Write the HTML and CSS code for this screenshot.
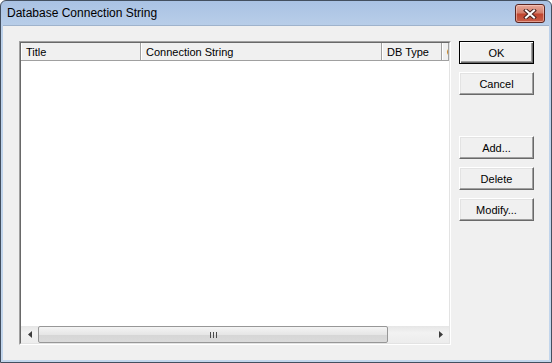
FILE: index.html
```html
<!DOCTYPE html>
<html lang="en">
<head>
    <meta charset="UTF-8">
    <title>Database Connection String</title>
    <link rel="stylesheet" href="styles.css">
</head>
<body>
    <div class="window">
        <div class="titlebar">
            <span class="title">Database Connection String</span>
            <button class="close" title="Close">
                <svg width="14" height="10" viewBox="0 0 14 10">
                    <path d="M3 1.5 L11 8.5 M11 1.5 L3 8.5" stroke="#4a2420" stroke-width="4" stroke-linecap="square" fill="none"/>
                    <path d="M3 1.5 L11 8.5 M11 1.5 L3 8.5" stroke="#ffffff" stroke-width="2" stroke-linecap="square" fill="none"/>
                </svg>
            </button>
        </div>

        <div class="client">
            <!-- list of connections -->
            <div class="listview">
                <div class="listinner">
                    <div class="header">
                        <div class="col col-title">Title</div>
                        <div class="col col-conn">Connection String</div>
                        <div class="col col-type">DB Type</div>
                        <div class="col col-more">C</div>
                    </div>
                    <div class="rows"></div>
                    <div class="hscroll">
                        <div class="arrow">
                            <svg width="4" height="7" viewBox="0 0 4 7"><path d="M4 0 L0 3.5 L4 7 Z" fill="#3c3c3c"/></svg>
                        </div>
                        <div class="thumb"><span class="grip"></span></div>
                        <div class="track"></div>
                        <div class="arrow">
                            <svg width="4" height="7" viewBox="0 0 4 7"><path d="M0 0 L4 3.5 L0 7 Z" fill="#3c3c3c"/></svg>
                        </div>
                    </div>
                </div>
            </div>

            <!-- dialog buttons -->
            <div class="buttons">
                <button class="btn default">OK</button>
                <button class="btn">Cancel</button>
                <button class="btn group">Add...</button>
                <button class="btn">Delete</button>
                <button class="btn">Modify...</button>
            </div>
        </div>
    </div>
</body>
</html>
```

FILE: styles.css
```css
body {
    margin: 0;
    font-family: 'Liberation Sans', Arial, sans-serif;
    background-color: #ffffff;
}
.window {
    width: 552px;
    height: 363px;
    box-sizing: border-box;
    border: 1px solid #434f5f;
    border-radius: 6px 6px 0 0;
    background: linear-gradient(#a9c2e3, #bcd1ea 30px, #c3d6ec);
    padding: 0 2px 2px;
    display: flex;
    flex-direction: column;
}
.titlebar {
    height: 24px;
    display: flex;
    align-items: flex-start;
    padding: 0 4px 0 4px;
}
.title {
    flex: 1;
    font-size: 12px;
    line-height: 25px;
    color: #000000;
}
.close {
    margin-top: 3px;
    width: 30px;
    height: 19px;
    padding: 0;
    border: 1px solid #5b2520;
    border-radius: 3px;
    background: linear-gradient(#e7a99b, #d4806d 45%, #c0452f 55%, #c8604a);
    box-shadow: inset 0 0 0 1px rgba(255, 220, 210, 0.5);
    display: flex;
    align-items: center;
    justify-content: center;
}
.client {
    flex: 1;
    background-color: #f0f0f0;
    display: flex;
    padding: 15px 0 0 16px;
    border-top: 1px solid #9fb3cc;
    box-sizing: border-box;
}
.listview {
    width: 432px;
    height: 304px;
    box-sizing: border-box;
    border-top: 1px solid #a0a0a0;
    border-left: 1px solid #a0a0a0;
    border-right: 1px solid #ffffff;
    border-bottom: 1px solid #ffffff;
}
.listinner {
    height: 100%;
    box-sizing: border-box;
    border-top: 1px solid #696969;
    border-left: 1px solid #696969;
    border-right: 1px solid #e3e3e3;
    border-bottom: 1px solid #e3e3e3;
    background-color: #ffffff;
    display: flex;
    flex-direction: column;
}
.header {
    height: 18px;
    display: flex;
    overflow: hidden;
    background-color: #f0f0f0;
    border-bottom: 1px solid #a0a0a0;
    box-sizing: border-box;
}
.col {
    flex: none;
    box-sizing: border-box;
    font-size: 11px;
    line-height: 15px;
    padding: 2px 0 0 4px;
    border-left: 1px solid #ffffff;
    border-right: 1px solid #a0a0a0;
    white-space: nowrap;
    overflow: hidden;
    color: #000000;
}
.col-title { width: 120px; }
.col-conn { width: 241px; }
.col-type { width: 60px; }
.col-more { width: 7px; }
.rows {
    flex: 1;
}
.hscroll {
    height: 17px;
    display: flex;
    background: linear-gradient(#e6e6e6, #f2f2f2 40%, #ececec);
}
.arrow {
    width: 17px;
    display: flex;
    align-items: center;
    justify-content: center;
}
.thumb {
    width: 350px;
    box-sizing: border-box;
    border: 1px solid #979797;
    border-radius: 2px;
    background: linear-gradient(#f4f4f4, #e6e6e6 50%, #d6d6d6 51%, #dadada);
    display: flex;
    align-items: center;
    justify-content: center;
}
.grip {
    width: 7px;
    height: 6px;
    background: repeating-linear-gradient(90deg, #4b4b4b 0, #4b4b4b 1px, transparent 1px, transparent 3px);
}
.track {
    flex: 1;
}
.buttons {
    display: flex;
    flex-direction: column;
    margin-left: 8px;
    gap: 8px;
}
.btn {
    width: 75px;
    height: 23px;
    box-sizing: border-box;
    padding: 0;
    font-family: 'Liberation Sans', Arial, sans-serif;
    font-size: 11px;
    color: #000000;
    background-color: #f0f0f0;
    border-top: 1px solid #ffffff;
    border-left: 1px solid #ffffff;
    border-right: 1px solid #696969;
    border-bottom: 1px solid #696969;
    box-shadow: inset -1px -1px 0 #a0a0a0, inset 1px 1px 0 #e3e3e3;
}
.btn.default {
    border: 1px solid #000000;
    box-shadow: inset 1px 1px 0 #ffffff, inset -1px -1px 0 #696969, inset -2px -2px 0 #a0a0a0;
}
.btn.group {
    margin-top: 33px;
}
```
